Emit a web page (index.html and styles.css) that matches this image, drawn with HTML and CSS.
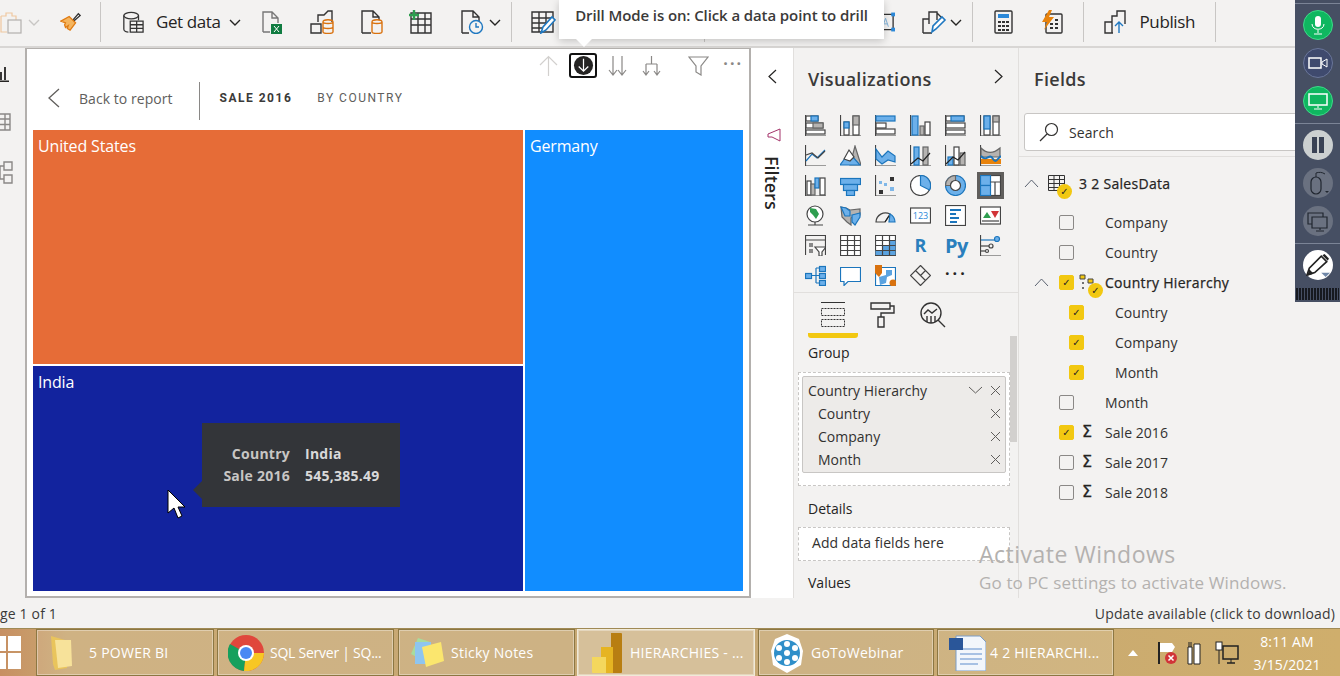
FILE: index.html
```html
<!DOCTYPE html>
<html lang="en">
<head>
<meta charset="utf-8">
<title>Power BI Desktop</title>
<link rel="stylesheet" href="styles.css">
</head>
<body>
<div class="app">
  <header class="ribbon">
    <svg class="ic w22" viewBox="0 0 22 24"><path class="fade-o" d="M1 6h5V3h6v3h4v4M1 6v16h6"/><rect class="fade-g" x="8" y="10" width="13" height="13"/></svg>
    <svg class="chev m6 faded" viewBox="0 0 12 7"><path d="M1 1l5 5 5-5"/></svg>
    <svg class="ic w22 m20" viewBox="0 0 24 24"><path d="M14 10l6-7 2 2-7 6z" fill="#fff" stroke="#333" stroke-width="1.400"/><path fill="#f5b55e" stroke="#e07b12" stroke-width="1.400" d="M1 11l9-5 7 7-6 8-3-2 1-3-3 2-1-3 1-2z"/></svg>
    <i class="sep m18"></i>
    <svg class="ic w22 m21" viewBox="0 0 24 24"><ellipse class="s-k" cx="10" cy="5" rx="8" ry="3.500"/><path class="s-k" d="M2 5v15c0 2 3 3 5 3M18 5v5"/><path class="s-k" d="M9 11h14v12H9zM9 15h14M9 19h14M16 11v12"/></svg>
    <span class="rtxt m12">Get data</span>
    <svg class="chev m8" viewBox="0 0 12 7"><path d="M1 1l5 5 5-5"/></svg>
    <svg class="ic w22 m20" viewBox="0 0 22 24"><path class="s-g" d="M2 22V2h9l6 6v5M2 22h7M11 2v6h6"/><rect x="10" y="14" width="11" height="10" fill="#107c41"/><path d="M13 16l5 6M18 16l-5 6" stroke="#fff" fill="none"/></svg>
    <svg class="ic w25 m26" viewBox="0 0 25 24"><path class="s-k" d="M9 12V5h6l4-4h4v11M2 14h10v9H2z"/><path class="s-o" d="M14 12c0-3 10-3 10 0v10c0 2-10 2-10 0zM14 12c0 2 10 2 10 0M14 17c0 2 10 2 10 0"/></svg>
    <svg class="ic w22 m27" viewBox="0 0 22 24"><path class="s-k" d="M1 23V1h11l6 6v3M1 23h9M12 1v6h6"/><path class="s-o" d="M11 12c0-3 10-3 10 0v10c0 2-10 2-10 0zM11 12c0 2 10 2 10 0"/></svg>
    <svg class="ic w24 m25" viewBox="0 0 24 24"><path class="s-k" d="M3 3h20v20H3zM3 9h20M3 15h20M10 3v20M17 3v20"/><path d="M6 0v10M1 5h10" stroke="#2e9e4f" stroke-width="2.400" fill="none"/></svg>
    <svg class="ic w23 m29" viewBox="0 0 23 24"><path class="s-k" d="M1 23V1h11l6 6v4M1 23h7M12 1v6h6"/><circle class="s-b" cx="15" cy="17" r="6.500"/><path class="s-b" d="M15 13v4h3"/></svg>
    <svg class="chev m5" viewBox="0 0 12 7"><path d="M1 1l5 5 5-5"/></svg>
    <i class="sep m10"></i>
    <svg class="ic w25 m19" viewBox="0 0 25 24"><path class="s-k" d="M1 2h21v20H1zM1 8h21M1 13h15M1 18h10M8 2v20M15 2v12"/><path class="s-b2" d="M10 23l2-6 9-10 3 3-9 10z"/></svg>
    <i class="sep m148"></i>
    <svg class="ic w17 m173" viewBox="0 0 18 24"><path class="s-k" d="M1 4h15v16H1"/><rect x="14" y="2" width="4" height="4" fill="#2b88d8"/><rect x="14" y="18" width="4" height="4" fill="#2b88d8"/><path d="M5 17l3-9 3 9M6 14h4" stroke="#7fb2dc" fill="none"/></svg>
    <svg class="ic w25 m27" viewBox="0 0 25 24"><path class="s-k" d="M1 23V9h6V2h8v8M1 23h9M7 9v5M15 3l6 6"/><path class="s-b2" d="M10 22l1-6 9-9 3 3-9 9z"/></svg>
    <svg class="chev m3" viewBox="0 0 12 7"><path d="M1 1l5 5 5-5"/></svg>
    <i class="sep m10"></i>
    <svg class="ic w19 m21" viewBox="0 0 19 24"><rect class="s-k" x="1" y="1" width="17" height="22" rx="1"/><rect x="4" y="4" width="11" height="4" fill="#2b88d8"/><path d="M4 11h3v2H4zM8 11h3v2H8zM12 11h3v2h-3zM4 15h3v2H4zM8 15h3v2H8zM12 15h3v2h-3zM4 19h3v2H4zM8 19h3v2H8zM12 19h3v2h-3z" fill="#333"/></svg>
    <svg class="ic w22 m28" viewBox="0 0 22 24"><rect class="s-k" x="5" y="4" width="16" height="19" rx="1"/><path d="M8 0L1 12h5l-3 8 10-13H8l3-7z" fill="#e8830c"/><path d="M9 13h3v2H9zM14 13h3v2h-3zM9 17h3v2H9zM14 17h3v2h-3zM14 9h3v2h-3z" fill="#333"/></svg>
    <i class="sep m20"></i>
    <svg class="ic w23 m20" viewBox="0 0 23 24"><path class="s-k" d="M1 23V12h7v11zM8 12V6h5V1h8v13M1 23h8"/><path class="s-b" d="M15 23V12M11 16l4-4 4 4"/></svg>
    <span class="rtxt pub">Publish</span>
    <i class="sep m20"></i>
  </header>

  <main class="main">
    <nav class="rail">
      <svg class="rail-ic r1" viewBox="0 0 9 16" width="9" height="16"><path class="s-kb" d="M1 6v8M5 1v13M0 15.500h9"/></svg>
      <svg class="rail-ic r2" viewBox="0 0 11 18" width="11" height="18"><path class="s-g2" d="M0 1h10v16H0M0 6h10M0 11.500h10M5 1v16"/></svg>
      <svg class="rail-ic r3" viewBox="0 0 13 23" width="13" height="23"><path class="s-g2" d="M4 1h8v8H4zM4 5H0M4 14h8v8H4zM4 18H0M0 5v13"/></svg>
    </nav>

    <section class="canvas">
      <div class="vh">
        <svg class="vh-ic up" viewBox="0 0 19 22"><path d="M9.500 21V2M1 10l8.500-8.500L18 10"/></svg>
        <span class="drill"><svg viewBox="0 0 22 22"><circle cx="11" cy="11" r="10" fill="#252423"/><path d="M11 4v13M6 12l5 5 5-5" stroke="#fff" stroke-width="1.300" fill="none"/></svg></span>
        <svg class="vh-ic dbl" viewBox="0 0 19 22"><path d="M5 1v19M1 15l4 5 4-5M14 1v19M10 15l4 5 4-5"/></svg>
        <svg class="vh-ic hier" viewBox="0 0 19 22"><path d="M9.500 1v8M4 9h11M4 9v11M15 9v11M1 16l3 4 3-4M12 16l3 4 3-4"/></svg>
        <svg class="vh-ic filt" viewBox="0 0 21 20"><path d="M1 1h19l-7 9v9l-5-3v-6z"/></svg>
        <span class="more">···</span>
      </div>
      <div class="backrow">
        <svg class="back" viewBox="0 0 12 20"><path d="M11 1L1 10l10 9"/></svg>
        <span class="backtxt">Back to report</span>
        <i class="backsep"></i>
        <span class="crumb strong">SALE 2016</span>
        <span class="crumb">BY COUNTRY</span>
      </div>
      <div class="treemap">
        <div class="tile us">United States</div>
        <div class="tile de">Germany</div>
        <div class="tile in">India</div>
      </div>
      <div class="tip">
        <span class="tk">Country</span><span class="tv">India</span>
        <span class="tk">Sale 2016</span><span class="tv">545,385.49</span>
      </div>
      <svg class="cursor" viewBox="0 0 18 30"><path d="M1 1v23l6-5 4 10 4-2-4-9h7z" fill="#fff" stroke="#000"/></svg>
    </section>

    <aside class="filters">
      <svg class="fchev" viewBox="0 0 9 15"><path d="M8 1L1 7.500 8 14"/></svg>
      <svg class="fico" viewBox="0 0 16 16"><path d="M14 2v12L6 10H2V7l12-5z" fill="none" stroke="#a4336a"/></svg>
      <span class="ftxt">Filters</span>
    </aside>

    <section class="viz">
      <div class="pane-h">Visualizations<svg class="pchev" viewBox="0 0 9 15"><path d="M1 1l7 6.500L1 14"/></svg></div>
      <div class="vgrid">
        <svg class="vi" viewBox="0 0 21 21"><path d="M.5 0v21H21"/><rect class="w" x="1" y="1" width="12" height="5"/><rect class="b" x="6" y="1" width="7" height="5"/><rect class="w" x="1" y="8" width="17" height="5"/><rect class="g" x="8" y="8" width="10" height="5"/><rect class="w" x="1" y="15" width="19" height="4"/></svg>
        <svg class="vi" viewBox="0 0 21 21"><path d="M.5 0v21H21"/><rect class="w" x="4" y="7" width="5" height="13"/><rect class="b" x="4" y="7" width="5" height="6"/><rect class="w" x="13" y="1" width="6" height="19"/><rect class="g" x="13" y="1" width="6" height="9"/></svg>
        <svg class="vi" viewBox="0 0 21 21"><path d="M.5 0v21H21"/><rect class="b" x="1" y="1" width="19" height="5"/><rect class="w" x="1" y="8" width="10" height="5"/><rect class="w" x="1" y="14" width="19" height="5"/></svg>
        <svg class="vi" viewBox="0 0 21 21"><path d="M.5 0v21H21"/><rect class="b" x="2" y="1" width="6" height="19"/><rect class="g" x="10" y="11" width="4" height="9"/><rect class="w" x="15" y="7" width="5" height="13"/></svg>
        <svg class="vi" viewBox="0 0 21 21"><path d="M.5 0v21H21"/><rect class="w" x="1" y="1" width="18" height="5"/><rect class="b" x="6" y="1" width="13" height="5"/><rect class="w" x="1" y="8" width="19" height="5"/><rect class="w" x="1" y="15" width="19" height="4"/></svg>
        <svg class="vi" viewBox="0 0 21 21"><path d="M.5 0v21H21"/><rect class="w" x="4" y="1" width="6" height="19"/><rect class="b" x="4" y="1" width="6" height="13"/><rect class="w" x="13" y="1" width="6" height="19"/><rect class="g" x="13" y="1" width="6" height="6"/></svg>

        <svg class="vi" viewBox="0 0 21 21"><path d="M.5 0v21H21"/><path class="bl" d="M1 16l6-7 5 4 8-8"/><path d="M1 10l6-2 6 5 7-7"/></svg>
        <svg class="vi" viewBox="0 0 21 21"><path class="g" d="M10 20l5-19 6 19z"/><path class="b" d="M0 20l6-8 6-1 8 9z"/><path class="w" d="M4 14l5-9 5 7-4 4z"/></svg>
        <svg class="vi" viewBox="0 0 21 21"><path d="M.5 0v21H21"/><path class="b" d="M1 4l6 8 6-6 7 5v6l-7-2-6 4-6-5z"/></svg>
        <svg class="vi" viewBox="0 0 21 21"><path d="M.5 0v21H21"/><rect class="b" x="4" y="2" width="5" height="18"/><rect class="g" x="13" y="2" width="5" height="18"/><path class="k2" d="M1 19l7-6 5 3 7-8"/></svg>
        <svg class="vi" viewBox="0 0 21 21"><path d="M.5 0v21H21"/><rect class="b" x="3" y="12" width="5" height="8"/><rect class="w" x="9" y="2" width="5" height="18"/><rect class="g" x="15" y="8" width="5" height="12"/><path class="k2" d="M1 19l7-7 5 3 7-8"/></svg>
        <svg class="vi" viewBox="0 0 21 21"><path d="M.5 0v21H21"/><path class="g" d="M1 3c6 6 12 6 19 0v9H1z"/><path d="M1 14h20v5H1z" fill="#e8830c" stroke="none"/><path class="bl" stroke-width="2" d="M1 11c6 7 8-4 12 3 3 5 5-1 8-3"/></svg>

        <svg class="vi" viewBox="0 0 21 21"><path d="M.5 0v21H21"/><rect class="w" x="2" y="6" width="4" height="14"/><rect class="g" x="6" y="9" width="4" height="11"/><rect class="b" x="10" y="3" width="4" height="10"/><rect class="w" x="15" y="3" width="5" height="17"/></svg>
        <svg class="vi" viewBox="0 0 21 21"><rect class="b" x=".5" y="3.500" width="20" height="6"/><rect class="b" x="3.500" y="9.500" width="14" height="6"/><rect class="b" x="6.500" y="15.500" width="8" height="5"/></svg>
        <svg class="vi" viewBox="0 0 21 21"><path d="M.5 0v21H21"/><rect x="15" y="2" width="4" height="4" fill="#333" stroke="none"/><rect x="4" y="6" width="3" height="3" fill="#7fb7e8" stroke="none"/><rect x="9" y="8" width="3" height="3" fill="#7fb7e8" stroke="none"/><rect x="15" y="12" width="4" height="4" fill="#7fb7e8" stroke="none"/><rect x="4" y="15" width="4" height="4" fill="#333" stroke="none"/></svg>
        <svg class="vi" viewBox="0 0 21 21"><circle class="w" cx="10.500" cy="10.500" r="10"/><path class="b" d="M10.500 .5a10 10 0 0 1 9 14.500l-9-4.500z"/></svg>
        <svg class="vi" viewBox="0 0 21 21"><circle class="b" cx="10.500" cy="10.500" r="10"/><path class="g" d="M10.500 .5a10 10 0 0 0-10 10h5a5 5 0 0 1 5-5z"/><circle class="w" cx="10.500" cy="10.500" r="5"/></svg>
        <span class="vsel"><svg class="vi" viewBox="0 0 21 21"><rect class="w" x=".5" y=".5" width="20" height="20"/><rect class="b" x=".5" y=".5" width="10" height="10"/><rect class="b" x=".5" y="10.500" width="10" height="10"/><path d="M10.500 7h10M15 7v14"/></svg></span>

        <svg class="vi" viewBox="0 0 21 21"><circle class="w" cx="10" cy="9" r="8"/><path d="M5 3l6 1 3 5-3 5-3-4-3-3z" fill="#2e9e4f" stroke="none"/><path d="M3 20h15M10 17v3"/></svg>
        <svg class="vi" viewBox="0 0 21 21"><path class="g" d="M1 2l5 1 4 2 10-1v6l-9 3v7l-4-3-5-5z"/><path class="b" d="M1 2l5 1 4 3v5H5zM12 10l8-2v4l-5 8-3-3z"/></svg>
        <svg class="vi" viewBox="0 0 21 21"><path d="M1 17a9.500 9.500 0 0 1 14-8L10 17z"/><path class="b" d="M15 9a9.500 9.500 0 0 1 5 8h-6z"/><path class="k2" d="M10 17l4-6"/></svg>
        <span class="vcard"><svg class="vi" viewBox="0 0 21 21"><rect class="w" x=".5" y="3" width="20" height="15"/><text x="10.500" y="14" class="n123">123</text></svg></span>
        <svg class="vi" viewBox="0 0 21 21"><rect class="w" x=".5" y=".5" width="20" height="20"/><path class="bl" stroke-width="2" d="M5 5h11M5 9h6M5 13h9M5 17h7"/></svg>
        <svg class="vi" viewBox="0 0 21 21"><rect class="w" x=".5" y="2" width="20" height="17"/><path d="M3 13l4-6 4 6z" fill="#2e9e4f" stroke="none"/><path d="M11 6h8l-4 7z" fill="#d13438" stroke="none"/><path d="M2 16h17"/></svg>

        <svg class="vi" viewBox="0 0 21 21"><path d="M.5 20V.5h20V20M.5 5h20"/><rect x="4" y="8" width="4" height="4" fill="#888" stroke="none"/><rect x="4" y="14" width="4" height="4" fill="#888" stroke="none"/><path class="w" d="M10 12h11l-4 5v4h-3v-4z"/></svg>
        <svg class="vi" viewBox="0 0 21 21"><path class="w" d="M.5 .5h20v20H.5z"/><path d="M.5 5.500h20M.5 10.500h20M.5 15.500h20M7.500 .5v20M14.500 .5v20"/></svg>
        <svg class="vi" viewBox="0 0 21 21"><path class="w" d="M.5 .5h20v20H.5z"/><path d="M14 5h6.500v15H14zM7 10h7v10H7zM.5 15H7v5H.5z" fill="#5ba3e0" stroke="none"/><path d="M.5 5.500h20M.5 10.500h20M.5 15.500h20M7.500 .5v20M14.500 .5v20"/></svg>
        <span class="vtxt">R</span>
        <span class="vtxt py">Py</span>
        <svg class="vi" viewBox="0 0 21 21"><path d="M.5 0v21H21"/><path class="bl" d="M1 5h14"/><circle class="b" cx="17" cy="4" r="2.500"/><path d="M1 11h8"/><circle cx="11" cy="11" r="2"/><path d="M1 16h4"/><circle cx="7" cy="16" r="1.500"/></svg>

        <svg class="vi" viewBox="0 0 21 21"><rect class="b" x=".5" y="8.500" width="6" height="5"/><path class="bl" d="M6 10.500h5M11 3v15M11 3h3M11 10.500h3M11 18h3"/><rect class="b" x="14.500" y="1.500" width="6" height="5"/><rect class="b" x="14.500" y="8.500" width="6" height="5"/><rect class="b" x="14.500" y="15.500" width="6" height="5"/></svg>
        <svg class="vi" viewBox="0 0 21 21"><path class="w bl" d="M.5 2.500h20v14H8l-4 4v-4H.5z"/></svg>
        <svg class="vi" viewBox="0 0 21 21"><path class="bl w" d="M.5 2.500h20v18H.5z"/><path d="M11 5h6v5l-5 2-1 6-6 2-1-8 7-2z" fill="#5ba3e0" stroke="none"/><path d="M0 0h7v8l-3 4-4-4z" fill="#d9720f" stroke="none"/><circle cx="18" cy="18" r="3.500" fill="#d9720f" stroke="none"/></svg>
        <svg class="vi" viewBox="0 0 21 21"><path d="M10.500 .5l10 10-10 10-10-10zM5.500 5.500l10 10M15.500 5.500l-5 5"/></svg>
        <span class="vdots">···</span>
        <span></span>
      </div>
      <div class="vtabs">
        <span class="vtab sel"><svg viewBox="0 0 26 26"><path d="M1 .5h24" stroke="#333"/><path class="dash" d="M1.500 6.500h23v7h-23zM1.500 17.500h23v7h-23z"/></svg></span>
        <svg class="vtab-ic" viewBox="0 0 26 26"><path class="s-k" d="M1 1h19v6H1zM20 4h4v7H11v4M8 15h6v10H8z"/></svg>
        <svg class="vtab-ic an" viewBox="0 0 26 26"><circle class="s-k" cx="11" cy="11" r="10"/><path class="s-k" d="M18 18l7 7M4 12l4-4 4 3 5-4M7 14v6M11 14v7M15 14v6"/></svg>
      </div>
      <div class="vscroll"></div>
      <div class="wlabel">Group</div>
      <div class="well">
        <div class="pill">
          <div class="prow head"><span>Country Hierarchy</span><svg class="pdown" viewBox="0 0 15 8"><path d="M1 1l6.500 6L14 1"/></svg><svg class="px" viewBox="0 0 11 11"><path d="M1 1l9 9M10 1l-9 9"/></svg></div>
          <div class="prow sub"><span>Country</span><svg class="px" viewBox="0 0 11 11"><path d="M1 1l9 9M10 1l-9 9"/></svg></div>
          <div class="prow sub"><span>Company</span><svg class="px" viewBox="0 0 11 11"><path d="M1 1l9 9M10 1l-9 9"/></svg></div>
          <div class="prow sub"><span>Month</span><svg class="px" viewBox="0 0 11 11"><path d="M1 1l9 9M10 1l-9 9"/></svg></div>
        </div>
      </div>
      <div class="wlabel l2">Details</div>
      <div class="well empty">Add data fields here</div>
      <div class="wlabel l3">Values</div>
    </section>

    <section class="fields">
      <div class="pane-h">Fields</div>
      <div class="search"><svg viewBox="0 0 20 20"><circle cx="12.500" cy="7.500" r="6"/><path d="M8 12l-7 7"/></svg><span>Search</span></div>
      <div class="tree">
        <div class="row top"><svg class="tchev" viewBox="0 0 15 9"><path d="M1 8l6.500-7L14 8"/></svg><span class="tbl"><svg viewBox="0 0 17 16"><path d="M.5 .5h16v15H.5zM.5 4.500h16M.5 8.500h16M.5 12.500h16M6 .5v15M11.500 .5v15" stroke="#333" fill="none"/></svg><b class="badge">✓</b></span><span class="tname">3 2 SalesData</span></div>
        <div class="row l1"><i class="cb"></i><span>Company</span></div>
        <div class="row l1"><i class="cb"></i><span>Country</span></div>
        <div class="row l1 hr"><svg class="tchev2" viewBox="0 0 15 9"><path d="M1 8l6.500-7L14 8"/></svg><i class="cb on">✓</i><span class="tbl h"><svg viewBox="0 0 17 16"><path d="M1 1h5v4H1zM9 5h5v4H9z" stroke="#444" fill="#f2c811"/><circle cx="4" cy="9" r="1" fill="#444"/><circle cx="4" cy="14" r="1" fill="#444"/></svg><b class="badge">✓</b></span><span class="tname">Country Hierarchy</span></div>
        <div class="row l2"><i class="cb on">✓</i><span>Country</span></div>
        <div class="row l2"><i class="cb on">✓</i><span>Company</span></div>
        <div class="row l2"><i class="cb on">✓</i><span>Month</span></div>
        <div class="row l1"><i class="cb"></i><span>Month</span></div>
        <div class="row l1"><i class="cb on">✓</i><b class="sig">Σ</b><span>Sale 2016</span></div>
        <div class="row l1"><i class="cb"></i><b class="sig">Σ</b><span>Sale 2017</span></div>
        <div class="row l1"><i class="cb"></i><b class="sig">Σ</b><span>Sale 2018</span></div>
      </div>
    </section>
  </main>

  <footer class="status"><span>ge 1 of 1</span><span>Update available (click to download)</span></footer>

  <div class="taskbar">
    <span class="start"><i></i><i></i><i></i><i></i></span>
    <a class="tb t1"><svg viewBox="0 0 30 38"><path d="M4 2l14 4 2 4v24l-12 2-2-6z" fill="#e9c45c"/><path d="M8 6h16l1 26-14 2z" fill="#f7e29a"/></svg><span>5 POWER BI</span></a>
    <a class="tb t2"><svg viewBox="0 0 36 40"><circle cx="18" cy="20" r="18" fill="#e0473c"/><path d="M18 20L2 11A18 18 0 0 0 16 38z" fill="#16a05d"/><path d="M18 20h18a18 18 0 0 1-20 18z" fill="#f7c723"/><circle cx="18" cy="20" r="8" fill="#fff"/><circle cx="18" cy="20" r="6" fill="#4a89f3"/></svg><span>SQL Server | SQ...</span></a>
    <a class="tb t3"><svg viewBox="0 0 36 34"><path d="M2 18L9 2l12 4-4 20z" fill="#a8dc9d"/><path d="M6 6h16v22H6z" fill="#8ec5f0"/><path d="M13 11l19-5 3 19-18 6z" fill="#fbe66e"/></svg><span>Sticky Notes</span></a>
    <a class="tb t4"><svg viewBox="0 0 30 40"><path d="M19 0h10a1 1 0 0 1 1 1v38a1 1 0 0 1-1 1H19z" fill="#b87e12"/><path d="M9 14h12v26H9z" fill="#e6b422"/><path d="M0 24h14v16H1a1 1 0 0 1-1-1z" fill="#f4d75d"/></svg><span>HIERARCHIES - ...</span></a>
    <a class="tb t5"><svg viewBox="0 0 36 40"><path d="M18 1l12 5 4 12-2 14-14 8-14-8-2-14 4-12z" fill="#fff"/><circle cx="18" cy="20" r="13" fill="#2f8fc9"/><circle cx="18" cy="20" r="3" fill="#fff"/><circle cx="18" cy="11" r="3" fill="#fff"/><circle cx="18" cy="29" r="3" fill="#fff"/><circle cx="10" cy="15" r="3" fill="#fff"/><circle cx="26" cy="15" r="3" fill="#fff"/><circle cx="10" cy="25" r="3" fill="#fff"/><circle cx="26" cy="25" r="3" fill="#fff"/></svg><span>GoToWebinar</span></a>
    <a class="tb t6"><svg viewBox="0 0 38 36"><path d="M8 1h24l6 6v29H8z" fill="#f2f6fb" stroke="#7a9cc6"/><path d="M12 14h22M12 19h22M12 24h22M12 29h18" stroke="#5c8ccc" fill="none"/><rect x="1" y="3" width="14" height="12" fill="#2a5699"/></svg><span>4 2 HIERARCHI...</span></a>
    <div class="tray">
      <svg class="tri" viewBox="0 0 12 7"><path d="M6 0l6 7H0z" fill="#fff"/></svg>
      <svg class="flag" viewBox="0 0 20 24"><path d="M2 1v22" stroke="#222" stroke-width="2"/><path d="M3 2h12l3 4-3 5H3z" fill="#fff"/><circle cx="14" cy="17" r="6" fill="#d13438"/><path d="M11.500 14.500l5 5M16.500 14.500l-5 5" stroke="#fff" stroke-width="1.500"/></svg>
      <svg class="batt" viewBox="0 0 14 24"><path d="M1 6h4v17H1zM7 3h6v20H7z" fill="#fff" stroke="#222"/><path d="M2 1v5M4 1v5" stroke="#222"/></svg>
      <svg class="net" viewBox="0 0 24 24"><path d="M8 5h15v13H8zM12 22h8" fill="none" stroke="#222" stroke-width="1.500"/><rect x="1" y="1" width="6" height="8" fill="#fff" stroke="#222"/><path d="M4 9v14M16 18v4" stroke="#222"/></svg>
      <div class="clock"><span>8:11 AM</span><span>3/15/2021</span></div>
    </div>
  </div>
</div>

<div class="drilltip">Drill Mode is on: Click a data point to drill</div>
<div class="activate"><span class="a1">Activate Windows</span><span class="a2">Go to PC settings to activate Windows.</span></div>

<div class="rec">
  <i class="recline first"></i>
  <span class="rc green"><svg viewBox="0 0 20 20"><rect x="7" y="1" width="6" height="11" rx="3" fill="#fff"/><path d="M4 9c0 7 12 7 12 0M10 15v3M6 19h8" stroke="#fff" fill="none"/></svg></span>
  <span class="rc navy"><svg viewBox="0 0 20 20"><rect x="1" y="5" width="12" height="10" fill="none" stroke="#fff" stroke-width="1.500"/><path d="M14 9l5-3v8l-5-3z" fill="none" stroke="#fff"/></svg></span>
  <span class="rc green"><svg viewBox="0 0 20 20"><rect x="1" y="3" width="18" height="11" fill="#0fb760" stroke="#fff" stroke-width="1.500"/><path d="M10 15v2M6 18h8" stroke="#fff"/></svg></span>
  <i class="recline"></i>
  <span class="rc light"><svg viewBox="0 0 20 20"><path d="M4 2h5v16H4zM11 2h5v16h-5z" fill="#3a4254"/></svg></span>
  <span class="rc gray"><svg class="big" viewBox="0 0 24 24"><rect x="5" y="6" width="10" height="17" rx="5" fill="none" stroke="#20262f" stroke-width="1.200"/><path d="M10 6V2c3-1 6-1 9 1" fill="none" stroke="#20262f"/><path d="M19 20h4l-2 2z" fill="#20262f"/></svg></span>
  <span class="rc gray"><svg class="big" viewBox="0 0 24 24"><path d="M2 4h15v11H2z" fill="none" stroke="#20262f" stroke-width="1.200"/><path d="M6 8h15v11H6zM14 19v2M10 22h8" fill="#6a7180" stroke="#20262f" stroke-width="1.200"/></svg></span>
  <i class="recline"></i>
  <span class="rc white"><svg class="big" viewBox="0 0 22 22"><path d="M1 20l2-6L14 3l5 5L8 18z" fill="#fff" stroke="#222" stroke-width="1.500"/><path d="M15 2l2-1 4 4-1 2z" fill="#222"/><path d="M1 21l2-6 4 4z" fill="#222"/><path d="M14 18h8l-4 4z" fill="#6f87a8"/></svg></span>
  <i class="bars"></i>
</div>
</body>
</html>
```
FILE: styles.css
```css
* { box-sizing: border-box; }
html, body { margin: 0; height: 100%; overflow: hidden; }
body { font-family: "Open Sans", "Noto Sans", sans-serif; font-size: 13px; color: #252423; background: #f3f2f1; }
svg { display: block; flex: none; }
.app { display: flex; flex-direction: column; width: 1340px; height: 676px; }

/* ribbon */
.ribbon { height: 48px; flex: none; display: flex; align-items: center; background: #f3f2f1; border-bottom: 2px solid #d8d6d4; padding-bottom: 2px; }
.ic { height: 24px; fill: none; }
.w17 { width: 17px; } .w19 { width: 19px; } .w22 { width: 22px; } .w23 { width: 23px; } .w24 { width: 24px; } .w25 { width: 25px; }
.chev { width: 12px; height: 7px; fill: none; stroke: #252423; stroke-width: 1.4; }
.chev.faded { stroke: #c8c6c4; }
.sep { display: block; width: 1px; height: 40px; background: #c8c6c4; flex: none; }
.rtxt { font-size: 17px; line-height: 24px; color: #252423; letter-spacing: -.4px; white-space: nowrap; }
.pub { width: 55px; margin-left: 13px; }
.m3 { margin-left: 3px; } .m5 { margin-left: 5px; } .m6 { margin-left: 6px; } .m8 { margin-left: 8px; } .m10 { margin-left: 10px; }
.m12 { margin-left: 12px; } .m18 { margin-left: 18px; } .m19 { margin-left: 19px; } .m20 { margin-left: 20px; }
.m21 { margin-left: 21px; } .m25 { margin-left: 25px; } .m26 { margin-left: 26px; } .m27 { margin-left: 27px; } .m28 { margin-left: 28px; }
.m29 { margin-left: 29px; } .m148 { margin-left: 148px; } .m173 { margin-left: 173px; }
.s-k { fill: none; stroke: #333; stroke-width: 1.4; }
.s-kb { fill: none; stroke: #252423; stroke-width: 1.8; }
.s-g { fill: none; stroke: #777; stroke-width: 1.4; }
.s-g2 { fill: none; stroke: #8a8886; stroke-width: 1.4; }
.s-o { fill: none; stroke: #d9720f; stroke-width: 1.4; }
.s-b { fill: none; stroke: #1f78c1; stroke-width: 1.4; }
.s-b2 { fill: #fff; stroke: #1f78c1; stroke-width: 1.6; }
.fade-o { fill: none; stroke: #f0c79f; stroke-width: 1.2; }
.fade-g { fill: none; stroke: #b3b0ad; stroke-width: 1.2; }

/* main */
.main { flex: 1; display: flex; min-height: 0; }
.rail { width: 25px; flex: none; display: flex; flex-direction: column; }
.r1 { margin-top: 18px; }
.r2 { margin-top: 31px; }
.r3 { margin-top: 30px; }

.canvas { width: 726px; flex: none; background: #fff; border: 2px solid #b3b0ad; border-top-width: 1px; padding: 0 6px; display: flex; flex-direction: column; position: relative; }
.vh { height: 33px; flex: none; display: flex; align-items: center; }
.vh-ic { height: 22px; fill: none; stroke: #8a8886; stroke-width: 1.2; }
.vh-ic.up { width: 19px; margin-left: 506px; stroke: #d2d0ce; }
.drill { margin-left: 11px; width: 30px; height: 25px; border: 2px solid #111; border-radius: 3px; display: flex; align-items: center; justify-content: center; }
.drill svg { width: 21px; height: 21px; }
.vh-ic.dbl { width: 19px; margin-left: 11px; }
.vh-ic.hier { width: 19px; margin-left: 15px; }
.vh-ic.filt { width: 21px; height: 20px; margin-left: 27px; }
.more { margin-left: 14px; font-size: 16px; font-weight: 700; letter-spacing: 2px; color: #8a8886; line-height: 18px; margin-top: -6px; }
.backrow { height: 38px; flex: none; display: flex; align-items: center; }
.back { width: 12px; height: 20px; margin: 0 0 6px 15px; fill: none; stroke: #605e5c; stroke-width: 1.3; }
.backtxt { margin: 0 0 6px 19px; font-size: 14px; color: #605e5c; letter-spacing: .05px; }
.backsep { width: 1px; height: 38px; background: #8a8886; margin-left: 26px; }
.crumb { margin: 0 0 6px 25px; font-size: 12px; letter-spacing: 1.5px; color: #605e5c; font-family: "Roboto", sans-serif; }
.crumb.strong { margin-left: 20px; font-weight: 700; color: #3b3a39; }
.treemap { margin-top: 10px; height: 461px; display: grid; grid-template-columns: 490px 218px; grid-template-rows: 234px 225px; gap: 2px; }
.tile { color: #fff; font-size: 16px; padding: 4px 5px; line-height: 24px; letter-spacing: -.15px; }
.us { background: #e66c37; grid-column: 1; grid-row: 1; }
.in { background: #12239e; grid-column: 1; grid-row: 2; }
.de { background: #118dff; grid-column: 2; grid-row: 1 / 3; }
.tip { position: absolute; left: 175px; top: 374px; width: 198px; height: 84px; background: #333539; display: grid; grid-template-columns: 88px auto; column-gap: 15px; align-content: center; font-size: 14px; font-weight: 700; line-height: 22px; letter-spacing: .25px; color: #d9d9d9; }
.tip::before { content: ""; position: absolute; left: -9px; top: 58px; border: 9px solid transparent; border-left: 0; border-right-color: #333539; }
.tk { text-align: right; color: #c8c6c4; }
.cursor { position: absolute; left: 140px; top: 440px; width: 18px; height: 30px; }

/* filters */
.filters { width: 42px; flex: none; background: #fff; display: flex; flex-direction: column; align-items: center; }
.fchev { width: 9px; height: 15px; margin-top: 21px; fill: none; stroke: #252423; stroke-width: 1.2; }
.fico { width: 16px; height: 16px; margin-top: 43px; margin-left: 4px; }
.ftxt { writing-mode: vertical-rl; font-size: 18px; font-weight: 600; margin-top: 13px; letter-spacing: 0; line-height: 20px; color: #252423; }

/* panes */
.viz { width: 226px; flex: none; border-left: 1px solid #e1dfdd; border-right: 1px solid #e1dfdd; position: relative; overflow: hidden; display: flex; flex-direction: column; }
.pane-h { height: 62px; flex: none; font-size: 18px; font-weight: 600; color: #3b3a39; display: flex; align-items: center; justify-content: space-between; padding-left: 14px; letter-spacing: .3px; }
.pchev { width: 9px; height: 15px; margin-right: 15px; margin-top: -6px; fill: none; stroke: #252423; stroke-width: 1.2; }
.vgrid { margin: 5px 0 0 11px; display: grid; grid-template-columns: repeat(6, 35px); grid-auto-rows: 30px; height: 177px; flex: none; }
.vi { width: 21px; height: 21px; fill: none; stroke: #444; stroke-width: 1.2; }
.vi .w { fill: #fff; }
.vi .b { fill: #6cb0ea; stroke: #1b75bc; }
.vi .g { fill: #b5b3b1; stroke: #666; }
.vi .bl { stroke: #1b75bc; }
.vi .w.bl { fill: #fff; }
.vi .k2 { stroke: #222; }
.n123 { font-family: "Open Sans", sans-serif; font-size: 9px; fill: #2b88d8; stroke: none; text-anchor: middle; }
.vcard { width: 21px; height: 21px; }
.vsel { width: 27px; height: 27px; margin: -3px 0 0 -3px; border: 3px solid #605e5c; background: #e1dfdd; display: block; }
.vtxt { width: 21px; height: 21px; font-size: 18px; line-height: 21px; font-weight: 700; color: #2a7fbd; text-align: center; white-space: nowrap; }
.vtxt.py { font-size: 20px; letter-spacing: -.5px; }
.vdots { width: 21px; height: 21px; font-size: 16px; line-height: 17px; font-weight: 700; letter-spacing: 3px; color: #252423; white-space: nowrap; }
.vtabs { height: 46px; flex: none; border-top: 1px solid #e1dfdd; display: flex; padding: 9px 0 0 14px; }
.vtab { width: 50px; height: 36px; border-bottom: 5px solid #f2c811; border-radius: 0 0 3px 3px; padding-left: 12px; }
.vtab svg { width: 26px; height: 26px; fill: none; }
.dash { stroke: #333; stroke-dasharray: 2 1; fill: none; }
.vtab-ic { width: 26px; height: 26px; margin-left: 12px; }
.vtab-ic.an { margin-left: 24px; }
.vscroll { position: absolute; right: 1px; top: 288px; width: 7px; height: 106px; background: #d2d0ce; }
.wlabel { height: 34px; flex: none; font-size: 14px; line-height: 30px; padding-left: 14px; color: #252423; }
.well { margin-left: 4px; width: 212px; flex: none; border: 1px dashed #c8c6c4; background: #fff; }
.pill { margin: 3px 3px 12px 3px; height: 97px; background: #edebe9; border: 1px solid #c8c6c4; border-radius: 2px; padding-top: 1px; }
.prow { height: 23px; display: flex; align-items: center; padding: 0 4px 0 5px; font-size: 14px; letter-spacing: 0; color: #323130; }
.prow.head { height: 24px; }
.prow span { flex: 1; }
.prow.sub { padding-left: 15px; }
.pdown { width: 15px; height: 8px; margin-right: 7px; fill: none; stroke: #605e5c; }
.px { width: 11px; height: 11px; fill: none; stroke: #605e5c; }
.wlabel.l2 { margin-top: 9px; height: 32px; line-height: 28px; }
.well.empty { height: 34px; font-size: 14px; line-height: 29px; padding-left: 13px; letter-spacing: .05px; color: #323130; }
.wlabel.l3 { margin-top: 7px; }

.fields { flex: 1; min-width: 0; overflow: hidden; }
.fields .pane-h { padding-left: 15px; }
.search { margin: 3px 0 0 5px; height: 38px; width: 400px; background: #fff; border: 1px solid #c8c6c4; border-radius: 3px; display: flex; align-items: center; padding-left: 14px; font-size: 14px; letter-spacing: .1px; color: #323130; }
.search svg { width: 20px; height: 20px; fill: none; stroke: #323130; stroke-width: 1.2; margin-right: 10px; }
.tree { border-top: 1px solid #e1dfdd; margin-top: 5px; padding-top: 11px; }
.row { height: 30px; display: flex; align-items: center; font-size: 14px; letter-spacing: .05px; color: #323130; }
.row.top { margin-bottom: 9px; padding-left: 5px; }
.row.l1 { padding-left: 40px; }
.row.l2 { padding-left: 50px; }
.row.hr { padding-left: 15px; }
.tchev { width: 15px; height: 9px; fill: none; stroke: #5a6270; margin-right: 9px; }
.tchev2 { width: 15px; height: 9px; fill: none; stroke: #5a6270; margin-right: 10px; }
.tbl { width: 17px; height: 16px; position: relative; margin-right: 14px; flex: none; }
.tbl svg { width: 17px; height: 16px; }
.tbl.h { margin: 0 8px 0 0; width: 18px; }
.badge { position: absolute; left: 9px; top: 9px; width: 15px; height: 15px; border-radius: 50%; background: #f2c811; font-size: 10px; line-height: 15px; text-align: center; color: #252423; font-weight: 700; font-family: "DejaVu Sans", sans-serif; }
.tname { white-space: nowrap; color: #252423; letter-spacing: .3px; -webkit-text-stroke: .25px #252423; }
.cb { width: 15px; height: 15px; flex: none; border: 1px solid #8a8886; border-radius: 2px; margin-right: 31px; font-style: normal; font-size: 10px; line-height: 13px; text-align: center; font-family: "DejaVu Sans", sans-serif; color: #252423; }
.cb.on { background: #f2c811; border-color: #f2c811; }
.hr .cb { margin-right: 5px; }
.sig { width: 12px; margin: 0 12px 0 -24px; font-size: 16px; font-weight: 400; font-family: "DejaVu Sans", sans-serif; text-align: center; color: #252423; line-height: 1; -webkit-text-stroke: .3px #252423; }
.status { height: 30px; flex: none; display: flex; justify-content: space-between; align-items: center; padding: 0 5px 0 0; font-size: 14px; letter-spacing: .17px; color: #3b3a39; background: #f3f2f1; }

/* taskbar */
.taskbar { height: 48px; flex: none; display: flex; align-items: stretch; color: #fff; background: linear-gradient(90deg, #c78f62 0, #c9a872 5%, #c6a874 60%, #cfae6c 100%); border-top: 1px solid #a08a55; }
.start { width: 36px; flex: none; display: grid; grid-template-columns: 6px 13px; grid-template-rows: 15px 16px; gap: 2px; align-content: center; }
.start i { background: #fff; display: block; }
.tb { height: 47px; flex: none; display: flex; align-items: center; border: 1px solid #8c7743; box-shadow: inset 0 0 0 1px rgba(255, 255, 255, .35); background: rgba(255, 255, 255, .12); font-size: 14px; letter-spacing: .25px; color: #fff; white-space: nowrap; }
.t1 { width: 178px; padding-left: 10px; gap: 12px; }
.t1 svg { width: 30px; height: 38px; }
.t2 { width: 177px; margin-left: 3px; padding-left: 10px; gap: 6px; letter-spacing: -.25px; }
.t2 svg { width: 36px; height: 40px; }
.t3 { width: 177px; margin-left: 4px; padding-left: 10px; gap: 6px; }
.t3 svg { width: 36px; height: 34px; }
.t4 { width: 178px; margin-left: 2px; padding-left: 14px; gap: 8px; background: rgba(255, 255, 255, .28); border-color: #f0ead8; }
.t4 svg { width: 30px; height: 40px; }
.t5 { width: 176px; margin-left: 3px; padding-left: 10px; gap: 6px; }
.t5 svg { width: 36px; height: 40px; }
.t6 { width: 177px; margin-left: 3px; padding-left: 10px; gap: 4px; }
.t6 svg { width: 38px; height: 36px; }
.tray { flex: 1; display: flex; align-items: center; color: #fff; }
.tri { width: 10px; height: 6px; margin-left: 14px; }
.flag { width: 20px; height: 24px; margin-left: 19px; }
.batt { width: 14px; height: 24px; margin-left: 10px; }
.net { width: 24px; height: 24px; margin-left: 14px; }
.clock { margin-left: 6px; width: 84px; display: flex; flex-direction: column; align-items: center; font-size: 14px; line-height: 23px; letter-spacing: .1px; }

/* overlays */
.drilltip { position: absolute; left: 559px; top: 0; width: 325px; height: 39px; background: #fff; box-shadow: 0 2px 8px rgba(0, 0, 0, .2); font-size: 15px; font-weight: 600; line-height: 30px; text-align: center; color: #3b3a39; letter-spacing: -.1px; }
.drilltip::after { content: ""; position: absolute; left: 17px; top: 39px; border: 8px solid transparent; border-top-color: #fff; border-bottom: 0; }
.activate { position: absolute; left: 979px; top: 539px; display: flex; flex-direction: column; color: #b3b1af; white-space: nowrap; }
.a1 { font-size: 23px; line-height: 30px; letter-spacing: .5px; }
.a2 { font-size: 17px; line-height: 28px; letter-spacing: .13px; }
.rec { position: absolute; right: 0; top: 0; width: 45px; height: 302px; background: #464f63; display: flex; flex-direction: column; align-items: center; }
.recline { display: block; width: 100%; height: 1px; background: #7b8496; margin-top: 7px; flex: none; }
.recline.first { margin-top: 3px; }
.rc { width: 30px; height: 30px; border-radius: 50%; display: flex; align-items: center; justify-content: center; margin-top: 8px; flex: none; }
.rc svg { width: 20px; height: 20px; }
.rc svg.big { width: 24px; height: 24px; }
.recline + .rc { margin-top: 6px; }
.green { background: #0fb760; border: 1px solid #3fd98a; }
.navy { background: #3f4a6e; border: 1px solid #6a7699; }
.light { background: #ccd0d0; }
.gray { background: #6a7180; }
.white { background: #fff; }
.bars { display: block; width: 43px; height: 12px; margin-top: 8px; flex: none; background: repeating-linear-gradient(90deg, #16191f 0 2px, #464f63 2px 3px); }
```
